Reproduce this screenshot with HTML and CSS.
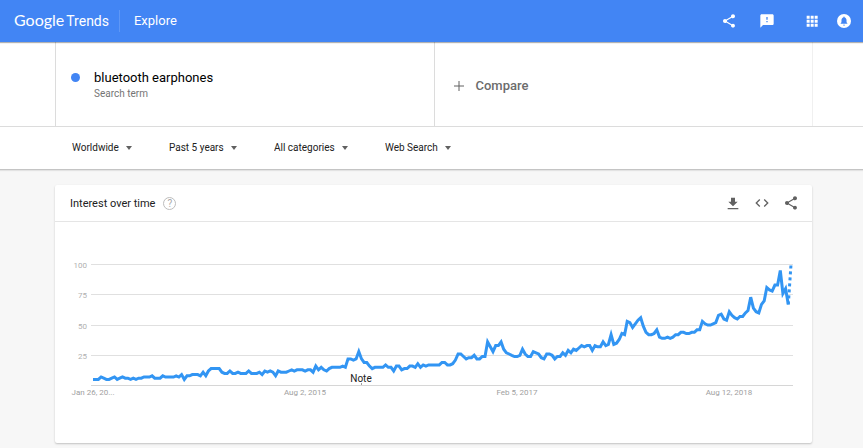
FILE: index.html
```html
<!DOCTYPE html>
<html lang="en">
<head>
  <meta charset="UTF-8" />
  <meta name="viewport" content="width=device-width, initial-scale=1" />
  <title>bluetooth earphones - Explore - Google Trends</title>
  <link rel="stylesheet" href="styles.css">
</head>
<body>

  <!-- Top bar -->
  <header class="topbar">
    <a href="#" class="logo"><span class="logo-google">Google</span><span class="logo-trends">Trends</span></a>
    <a href="#" class="topbar-page">Explore</a>

    <div class="topbar-actions">
      <button class="icon-btn" aria-label="Share">
        <svg viewBox="0 0 24 24"><path d="M18 16.1c-.8 0-1.4.3-2 .8l-7.100-4.200c.1-.2.100-.5.100-.7s0-.5-.1-.7L16 7.200c.5.500 1.200.8 2 .8 1.700 0 3-1.300 3-3s-1.300-3-3-3-3 1.300-3 3c0 .2 0 .5.100.7L8 9.800C7.500 9.300 6.800 9 6 9c-1.700 0-3 1.300-3 3s1.300 3 3 3c.8 0 1.500-.3 2-.8l7.100 4.200c-.1.200-.1.400-.1.600 0 1.600 1.300 2.900 3 2.900s2.900-1.300 2.900-2.900-1.300-2.900-2.900-2.900z"/></svg>
      </button>
      <button class="icon-btn" aria-label="Send feedback">
        <svg viewBox="0 0 24 24"><path d="M20 2H4c-1.100 0-2 .9-2 2v18l4-4h14c1.100 0 2-.9 2-2V4c0-1.100-.9-2-2-2zm-7 12h-2v-2h2v2zm0-4h-2V6h2v4z"/></svg>
      </button>
      <button class="icon-btn icon-btn-apps" aria-label="Google apps">
        <svg viewBox="0 0 24 24"><path d="M4 4h4.500v4.500H4zM10 4h4.500v4.500H10zM16 4h4.500v4.500H16zM4 10h4.500v4.500H4zM10 10h4.500v4.500H10zM16 10h4.500v4.500H16zM4 16h4.500v4.500H4zM10 16h4.500v4.500H10zM16 16h4.500v4.500H16z"/></svg>
      </button>
      <button class="icon-btn" aria-label="Notifications">
        <svg viewBox="0 0 24 24"><circle cx="12" cy="12" r="10.500"/><path class="bell" d="M12 19c.9 0 1.500-.6 1.500-1.400h-3c0 .8.6 1.400 1.500 1.400zm5-3.800l-1.200-1.200v-3.300c0-2-1.200-3.600-2.900-4v-.5c0-.6-.4-1-.9-1s-.9.4-.9 1v.5c-1.700.4-2.900 2-2.900 4V14L7 15.200v.9h10z"/></svg>
      </button>
    </div>
  </header>

  <!-- Search terms -->
  <section class="terms">
    <div class="terms-row">
      <button class="term">
        <span class="term-dot"></span>
        <span class="term-text">
          <span class="term-name">bluetooth earphones</span>
          <span class="term-type">Search term</span>
        </span>
      </button>
      <button class="compare">
        <svg viewBox="0 0 10 10"><path d="M5 0v10M0 5h10"/></svg>
        Compare
      </button>
    </div>
  </section>

  <!-- Filters -->
  <nav class="filters">
    <div class="filter">
      <select aria-label="Region"><option>Worldwide</option></select>
    </div>
    <div class="filter">
      <select aria-label="Time range"><option>Past 5 years</option></select>
    </div>
    <div class="filter">
      <select aria-label="Category"><option>All categories</option></select>
    </div>
    <div class="filter">
      <select aria-label="Search type"><option>Web Search</option></select>
    </div>
  </nav>

  <!-- Interest over time -->
  <main class="card">
    <div class="card-header">
      <h2>Interest over time</h2>
      <button class="help" aria-label="Help">?</button>
      <div class="card-actions">
        <button class="icon-btn" aria-label="Download CSV">
          <svg viewBox="0 0 24 24"><path d="M19 10h-4V4H9v6H5l7 7 7-7zM4 19.500v2h16v-2H4z"/></svg>
        </button>
        <button class="icon-btn" aria-label="Embed">
          <svg viewBox="0 0 24 24"><path d="M9.400 16.600L4.800 12l4.600-4.600L8 6l-6 6 6 6 1.400-1.400zm5.200 0l4.600-4.600-4.600-4.600L16 6l6 6-6 6-1.400-1.400z"/></svg>
        </button>
        <button class="icon-btn" aria-label="Share chart">
          <svg viewBox="0 0 24 24"><path d="M18 16.100c-.8 0-1.400.3-2 .8l-7.100-4.200c.1-.2.100-.5.100-.7s0-.5-.1-.7L16 7.200c.5.500 1.200.8 2 .8 1.700 0 3-1.300 3-3s-1.300-3-3-3-3 1.300-3 3c0 .2 0 .5.100.7L8 9.800C7.500 9.300 6.800 9 6 9c-1.700 0-3 1.300-3 3s1.300 3 3 3c.8 0 1.500-.3 2-.8l7.100 4.200c-.1.200-.1.400-.1.600 0 1.600 1.300 2.900 3 2.900s2.900-1.300 2.900-2.900-1.300-2.900-2.900-2.900z"/></svg>
        </button>
      </div>
    </div>

    <svg class="chart" viewBox="0 0 757 221" role="img" aria-label="Interest over time for bluetooth earphones">
      <g class="grid">
        <path d="M36 42.500h702M36 72.500h702M36 103.500h702M36 133.500h702"/>
        <path class="axis" d="M36 163.500h702"/>
        <path class="note-tick" d="M306.500 161v2"/>
      </g>
      <g class="y-labels">
        <text x="32" y="46">100</text>
        <text x="32" y="76">75</text>
        <text x="32" y="107">50</text>
        <text x="32" y="137">25</text>
      </g>
      <g class="x-labels">
        <text x="38" y="173">Jan 26, 20...</text>
        <text x="250" y="173">Aug 2, 2015</text>
        <text x="462" y="173">Feb 5, 2017</text>
        <text x="674" y="173">Aug 12, 2018</text>
      </g>
      <polyline id="line" class="line" />
      <polyline id="partial" class="line line-partial" />
      <text class="note" x="306" y="160">Note</text>
    </svg>
  </main>

  <script>
    // Weekly interest values, the last one is a partial week
    const values = [
      5, 5, 5, 7, 6, 5, 5, 6, 7, 5, 6, 7, 6, 6, 5, 6, 5, 6, 6, 7,
      7, 7, 8, 6, 6, 6, 8, 7, 7, 7, 7, 8, 7, 9, 5, 8, 8, 9, 9, 9,
      8, 11, 8, 12, 14, 14, 14, 14, 11, 10, 10, 12, 10, 10, 11, 10, 10, 10, 12, 10,
      10, 10, 11, 9, 12, 11, 12, 11, 8, 12, 11, 11, 11, 12, 13, 12, 13, 13, 13, 12,
      13, 13, 11, 16, 13, 15, 13, 12, 14, 15, 15, 15, 15, 16, 15, 22, 22, 21, 22, 28,
      22, 19, 19, 16, 14, 15, 15, 15, 15, 17, 15, 15, 12, 16, 16, 13, 14, 14, 16, 16,
      15, 18, 15, 17, 16, 17, 17, 17, 17, 17, 19, 19, 17, 17, 18, 21, 26, 26, 24, 22,
      23, 23, 25, 22, 22, 24, 24, 36, 32, 28, 33, 33, 36, 30, 27, 26, 25, 24, 24, 25,
      30, 26, 24, 24, 28, 27, 26, 23, 22, 26, 26, 25, 22, 24, 24, 27, 25, 29, 27, 30,
      29, 31, 33, 32, 33, 33, 29, 33, 32, 32, 36, 33, 34, 42, 34, 35, 38, 43, 42, 53,
      52, 48, 51, 54, 56, 49, 44, 42, 42, 43, 46, 40, 39, 39, 40, 39, 40, 42, 42, 44,
      44, 43, 43, 44, 44, 46, 46, 53, 51, 50, 50, 51, 52, 58, 59, 55, 54, 61, 58, 56,
      55, 57, 57, 60, 62, 73, 64, 61, 60, 67, 70, 81, 79, 78, 83, 83, 95, 76, 80, 67,
      100
    ];

    const left = 38, right = 736, top0 = 42.5, bottom = 163.5;
    const step = (right - left) / (values.length - 1);
    const points = values.map((v, i) =>
      (left + i * step).toFixed(1) + ',' + (bottom - v * (bottom - top0) / 100).toFixed(1)
    );

    document.getElementById('line').setAttribute('points', points.slice(0, -1).join(' '));
    document.getElementById('partial').setAttribute('points', points.slice(-2).join(' '));
  </script>
</body>
</html>
```

FILE: styles.css
```css
* {
  box-sizing: border-box;
}

body {
  margin: 0;
  background: #f7f7f7;
  color: #212121;
  font-family: Roboto, "Liberation Sans", sans-serif;
  font-size: 10px;
}

button, select {
  margin: 0;
  padding: 0;
  border: none;
  background: none;
  color: inherit;
  font: inherit;
  cursor: pointer;
}

a {
  color: inherit;
  text-decoration: none;
}

/* Top bar */
.topbar {
  position: relative;
  display: flex;
  align-items: center;
  height: 42px;
  padding: 0 11px 0 14px;
  background: #4285f4;
  color: #fff;
  box-shadow: 0 1px 1px rgba(0, 0, 0, 0.3);
}

.logo {
  display: flex;
  align-items: baseline;
  gap: 2px;
  padding-bottom: 4px;
  font-size: 14px;
}

.logo-google {
  font-family: Lato, sans-serif;
  font-size: 16px;
}

.topbar-page {
  margin-left: 10px;
  padding-left: 14px;
  border-left: 1px solid #5e97f6;
  font-size: 13px;
  line-height: 22px;
}

.topbar-actions {
  display: flex;
  align-items: center;
  gap: 22px;
  margin-left: auto;
}

.icon-btn {
  display: flex;
}

.icon-btn svg {
  width: 16px;
  height: 16px;
  fill: currentColor;
}

.icon-btn-apps {
  margin-left: 7px;
}

.topbar-actions .icon-btn:last-child {
  margin-left: -6px;
}

.icon-btn .bell {
  fill: #4285f4;
}

/* Search terms */
.terms {
  padding: 0 50px 0 55px;
  background: #fff;
  border-bottom: 1px solid #dcdcdc;
}

.terms-row {
  display: flex;
  height: 84px;
  border-right: 1px solid #f0f0f0;
}

.term, .compare {
  width: 50%;
  display: flex;
  border-left: 1px solid #dcdcdc;
  text-align: left;
}

.term {
  align-items: center;
  gap: 14px;
  padding: 2px 0 0 15px;
}

.term-dot {
  width: 9px;
  height: 9px;
  margin-bottom: 16px;
  border-radius: 50%;
  background: #4285f4;
}

.term-text {
  display: flex;
  flex-direction: column;
}

.term-name {
  color: #000;
  font-size: 13px;
  line-height: 18px;
}

.term-type {
  color: #757575;
  line-height: 14px;
}

.compare {
  align-items: center;
  gap: 12px;
  padding: 3px 0 0 19px;
  color: #6c6c6c;
  font-size: 13px;
  font-weight: 500;
}

.compare svg {
  width: 10px;
  height: 10px;
  fill: none;
  stroke: #616161;
}

/* Filters */
.filters {
  display: flex;
  align-items: center;
  gap: 36px;
  height: 43px;
  padding-left: 72px;
  background: #fff;
  border-bottom: 1px solid #c4c4c4;
  box-shadow: 0 1px 1px rgba(0, 0, 0, 0.08);
}

.filter {
  position: relative;
}

.filter select {
  appearance: none;
  padding-right: 14px;
  line-height: 14px;
}

/* caret */
.filter::after {
  content: "";
  position: absolute;
  top: 5px;
  right: 1px;
  border: 3px solid transparent;
  border-top: 4px solid #616161;
  border-bottom: none;
  pointer-events: none;
}

/* Chart card */
.card {
  margin: 15px 51px 5px 55px;
  background: #fff;
  border-radius: 2px;
  box-shadow: 0 1px 2px rgba(0, 0, 0, 0.22);
}

.card-header {
  display: flex;
  align-items: center;
  height: 37px;
  padding: 0 13px 0 15px;
  border-bottom: 1px solid #e5e5e5;
}

.card-header h2 {
  margin: 0;
  font-size: 11px;
  font-weight: 400;
}

.help {
  width: 13px;
  height: 13px;
  margin-left: 8px;
  border: 1px solid #bdbdbd;
  border-radius: 50%;
  color: #aaa;
  line-height: 11px;
}

.card-actions {
  display: flex;
  gap: 13px;
  margin-left: auto;
  color: #616161;
}

.chart {
  display: block;
  width: 100%;
  font-size: 8px;
}

.grid path {
  fill: none;
  stroke: #e0e0e0;
}

.grid .axis {
  stroke: #d6d6d6;
}

.grid .note-tick {
  stroke: #9e9e9e;
}

.y-labels {
  fill: #b0b0b0;
  text-anchor: end;
}

.x-labels {
  fill: #a0a0a0;
  text-anchor: middle;
}

.note {
  fill: #212121;
  font-size: 10px;
  text-anchor: middle;
}

.line {
  fill: none;
  stroke: #3295f3;
  stroke-width: 3;
}

.line-partial {
  stroke-dasharray: 3 3;
}
```
